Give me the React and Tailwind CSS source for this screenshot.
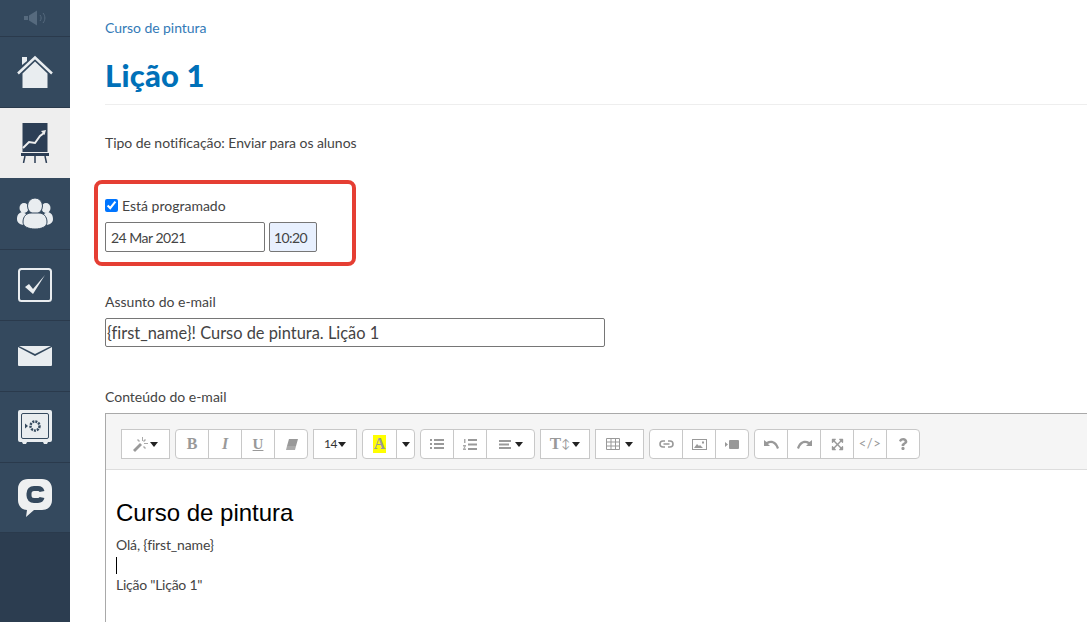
import React from 'react';
import { FaExpandArrowsAlt, FaQuestion } from 'react-icons/fa';

const Caret = () => (
    <svg width="8" height="5" viewBox="0 0 8 5" className="shrink-0"><path d="M0 0h8L4 5z" fill="#222" /></svg>
);

function Megaphone() {
    return (
        <svg width="24" height="16" viewBox="0 0 24 16" fill="#566a7e">
            <path d="M1 6h4v4H1zM6 5.500l8-5v15l-8-5z" />
            <path d="M17 5c1.500 1.800 1.500 4.200 0 6M20 3c2.500 3 2.500 7 0 10" fill="none" stroke="#566a7e" />
        </svg>
    );
}

function HomeIcon() {
    return (
        <svg width="36" height="34" viewBox="0 0 36 34">
            <path d="M5 2h5v4L5 10z" fill="#e9edf0" />
            <path d="M1 18.500L18 2.500l17 16" fill="none" stroke="#e9edf0" strokeWidth="2.500" />
            <path d="M5.500 18.500L18 6.500l12.500 12V33h-25z" fill="#e9edf0" />
        </svg>
    );
}

function ChartIcon() {
    return (
        <svg width="28" height="40" viewBox="0 0 28 40">
            <rect x="1.500" y="0" width="25" height="29" fill="#2c3e55" />
            <path d="M2 25l6-6 6 1 5-7 4-3" fill="none" stroke="#eee" strokeWidth="2" />
            <path d="M25 7l-5 1 3.500 4z" fill="#eee" />
            <rect x="0" y="30" width="28" height="3" fill="#2c3e55" />
            <path d="M4 33l-1.500 7M14 33v7M24 33l1.500 7" stroke="#2c3e55" strokeWidth="1.500" />
        </svg>
    );
}

function TeamIcon() {
    return (
        <svg width="36" height="31" viewBox="0 0 36 31" fill="#e9edf0">
            <ellipse cx="7" cy="10" rx="4.500" ry="5" />
            <ellipse cx="29" cy="10" rx="4.500" ry="5" />
            <path d="M0 21c0-5 3-7 6-7l3 2-2 11c-4-.500-7-2-7-6zM36 21c0-5-3-7-6-7l-3 2 2 11c4-.500 7-2 7-6z" />
            <ellipse cx="18" cy="8" rx="7.500" ry="8" stroke="#34495e" strokeWidth="1" />
            <path d="M6 24c0-6 4-9 8-9h8c4 0 8 3 8 9 0 5-6 7-12 7S6 29 6 24z" stroke="#34495e" strokeWidth="1" />
        </svg>
    );
}

function CheckIcon() {
    return (
        <svg width="34" height="34" viewBox="0 0 34 34">
            <rect x="1" y="1" width="32" height="32" rx="2.500" fill="none" stroke="#e9edf0" strokeWidth="2" />
            <path d="M7 19l4-3 4 5L27 7 15 26z" fill="#e9edf0" />
        </svg>
    );
}

function MailIcon() {
    return (
        <svg width="34" height="20" viewBox="0 0 34 20" fill="#e9edf0">
            <path d="M0 1l17 9 17-9v18a1 1 0 0 1-1 1H1a1 1 0 0 1-1-1z" />
            <path d="M1 0h32L17 8z" />
        </svg>
    );
}

function SafeIcon() {
    return (
        <svg width="34" height="34" viewBox="0 0 34 34">
            <path d="M2 0h30a2 2 0 0 1 2 2v28a2 2 0 0 1-2 2h-2l-1 2h-3l-1-2H9l-1 2H5l-1-2H2a2 2 0 0 1-2-2V2a2 2 0 0 1 2-2z" fill="#e9edf0" />
            <rect x="3.500" y="3.500" width="27" height="25" rx="1.500" fill="none" stroke="#34495e" />
            <circle cx="17" cy="16" r="4.500" fill="none" stroke="#34495e" strokeWidth="2.500" strokeDasharray="2 1" />
            <path d="M7 13.500l3 2.500-3 2.500z" fill="#34495e" />
        </svg>
    );
}

function ChatIcon() {
    return (
        <svg width="34" height="38" viewBox="0 0 34 38">
            <path d="M10 0h14c6 0 10 4 10 10v11c0 6-4 10-10 10H16l-8 7 1-7C4 31 0 27 0 21V10C0 4 4 0 10 0z" fill="#eef0f1" />
            <path d="M24 12.500c-.500-2-2-3-4-3h-4c-3 0-5 2-5 5v2c0 3 2 5 5 5h4c2 0 3.500-1 4-3" fill="none" stroke="#34495e" strokeWidth="5" />
        </svg>
    );
}

function Sidebar() {
    const items = [
        [HomeIcon, 'h-[71px]', false],
        [ChartIcon, 'h-[70px]', true],
        [TeamIcon, 'h-[72px]', false],
        [CheckIcon, 'h-[71px]', false],
        [MailIcon, 'h-[71px]', false],
        [SafeIcon, 'h-[71px]', false],
        [ChatIcon, 'h-[70px]', false],
    ];
    return (
        <aside className="w-[70px] shrink-0 h-full bg-[#2c3d50] flex flex-col">
            <div className="h-[37px] bg-[#34495e] border-b border-[#2a3a4c] flex items-center justify-center">
                <Megaphone />
            </div>
            {items.map(([Icon, height, active], i) => (
                <div
                    key={i}
                    className={`${height} flex items-center justify-center border-b ${active ? 'bg-[#eeeeee] border-[#eeeeee]' : 'bg-[#34495e] border-[#2a3a4c]'}`}
                >
                    <Icon />
                </div>
            ))}
        </aside>
    );
}

// toolbar glyphs, same grey as the editor's icon font
const WandIcon = () => (
    <svg width="15" height="15" viewBox="0 0 15 15" fill="#999">
        <path d="M0 13l7-7 2 2-7 7z" />
        <path d="M9 0h1v4H9zM11 6h4v1h-4zM12 2l1 1-2 2-1-1zM5 2l2 2-1 1-2-2zM11 9l2 2-1 1-2-2z" fill="#aaa" />
    </svg>
);
const EraserIcon = () => (
    <svg width="13" height="11" viewBox="0 0 13 11" fill="#999">
        <path d="M4 0h9l-2 7H2z" />
        <path d="M2 7h9l-1 4H1z" fill="#aaa" />
    </svg>
);
const ListIcon = () => (
    <svg width="14" height="10" viewBox="0 0 14 10" fill="#999">
        <path d="M0 0h2v2H0zM4 0h10v2H4zM0 4h2v2H0zM4 4h10v2H4zM0 8h2v2H0zM4 8h10v2H4z" />
    </svg>
);
const OrderedIcon = () => (
    <svg width="14" height="11" viewBox="0 0 14 11" fill="#999">
        <path d="M5 0h9v2H5zM5 4.500h9v2H5zM5 9h9v2H5z" />
        <path d="M1 0h1.500v4H1zM0 6h3v1L1.500 9.500H3V11H0v-1l1.500-2.500H0z" fill="#aaa" />
    </svg>
);
const AlignIcon = () => (
    <svg width="12" height="9" viewBox="0 0 12 9" fill="#999">
        <path d="M0 0h12v2H0zM0 3.500h10v2H0zM0 7h12v2H0z" />
    </svg>
);
const TableIcon = () => (
    <svg width="14" height="12" viewBox="0 0 14 12" fill="none" stroke="#999">
        <path d="M.5.500h13v11H.5zM.5 4h13M.5 8h13M5 .5v11M9.500.5v11" />
    </svg>
);
const LinkIcon = () => (
    <svg width="15" height="8" viewBox="0 0 15 8" fill="none" stroke="#999" strokeWidth="1.600">
        <path d="M6 1H4a3 3 0 0 0 0 6h2M9 1h2a3 3 0 0 1 0 6H9M4.500 4h6" />
    </svg>
);
const ImageIcon = () => (
    <svg width="15" height="11" viewBox="0 0 15 11">
        <rect x=".5" y=".5" width="14" height="10" fill="none" stroke="#999" />
        <path d="M2 9l3-4 2 2 1-1 3 3z" fill="#999" />
        <rect x="10" y="2.500" width="2" height="2" fill="#999" />
    </svg>
);
const VideoIcon = () => (
    <svg width="14" height="9" viewBox="0 0 14 9" fill="#999">
        <path d="M0 2l3 2.500L0 7z" />
        <rect x="4" y="0" width="10" height="9" rx="1" />
    </svg>
);
const UndoIcon = ({ flip }) => (
    <svg width="15" height="9" viewBox="0 0 15 9" fill="#999" className={flip ? '-scale-x-100' : ''}>
        <path d="M0 0v6h6L4 4c3-2 7-1 9 5l2-1C13 1 7-1 2.500 2z" />
    </svg>
);

const btn = 'h-[30px] flex items-center justify-center bg-white border border-[#c8c8c8] text-[#999] text-[14px]';

function Group({ width, children }) {
    return (
        <div className={`${width} flex rounded-[4px] overflow-hidden border border-[#c8c8c8] h-[30px] bg-white [&>*]:border-r [&>*]:border-[#c8c8c8] [&>*:last-child]:border-r-0 [&>*:last-child]:w-auto [&>*:last-child]:flex-1`}>
            {children}
        </div>
    );
}

const Cell = ({ w = 'w-[33px]', children }) => (
    <div className={`${w} h-full flex items-center justify-center gap-[4px] text-[#999] text-[14px]`}>{children}</div>
);

function Toolbar() {
    return (
        <div className="h-[56px] bg-[#f5f5f5] border-b border-[#dddddd] pl-[15px] pt-[15px] flex gap-[5px]">
            <div className={`${btn} w-[49px] gap-[2px]`}><WandIcon /><Caret /></div>
            <Group width="w-[133px]">
                <Cell><span className="font-['Liberation_Serif',serif] font-bold text-[16px]">B</span></Cell>
                <Cell><span className="font-['Liberation_Serif',serif] italic font-bold text-[16px]">I</span></Cell>
                <Cell><span className="font-['Liberation_Serif',serif] font-bold text-[15px] underline">U</span></Cell>
                <Cell><EraserIcon /></Cell>
            </Group>
            <div className={`${btn} w-[44px] !text-[#333] !text-[12px] gap-[1px] tracking-[-0.5px]`}>14<Caret /></div>
            <Group width="w-[53px]">
                <Cell w="w-[34px]"><span className="bg-[#ffff00] font-['Liberation_Serif',serif] font-bold text-[16px] leading-[18px] px-[1px]">A</span></Cell>
                <Cell><Caret /></Cell>
            </Group>
            <Group width="w-[115px]">
                <Cell><ListIcon /></Cell>
                <Cell><OrderedIcon /></Cell>
                <Cell><AlignIcon /><Caret /></Cell>
            </Group>
            <div className={`${btn} w-[50px] gap-[2px]`}>
                <span className="font-['Liberation_Serif',serif] font-bold text-[17px]">T</span>
                <span className="text-[12px] -ml-[2px]">↕</span>
                <Caret />
            </div>
            <div className={`${btn} w-[49px] gap-[5px]`}>
                <TableIcon />
                <Caret />
            </div>
            <Group width="w-[100px]">
                <Cell><LinkIcon /></Cell>
                <Cell><ImageIcon /></Cell>
                <Cell><VideoIcon /></Cell>
            </Group>
            <Group width="w-[166px]">
                <Cell><UndoIcon /></Cell>
                <Cell><UndoIcon flip /></Cell>
                <Cell><FaExpandArrowsAlt size={13} /></Cell>
                <Cell><span className="text-[13px] tracking-[0.5px]">{'</>'}</span></Cell>
                <Cell><FaQuestion size={12} /></Cell>
            </Group>
        </div>
    );
}

export default function App() {
    return (
        <div className="h-[622px] w-full flex overflow-hidden bg-white font-['Lato','Open_Sans',sans-serif] text-[14px] text-[#444] [font-variant-ligatures:none]">
            <Sidebar />
            <main className="flex-1 min-w-0 pl-[35px]">
                <div className="pt-[19px] leading-[18px] text-[#337ab7] tracking-[-0.05px]">Curso de pintura</div>
                <h1 className="mt-[18px] text-[31px] leading-[40px] font-black text-[#0070b8] tracking-[0.2px]">Lição 1</h1>
                <div className="mt-[9px] border-t border-[#eeeeee]" />
                <p className="mt-[29px] leading-[18px] tracking-[-0.05px]">Tipo de notificação: Enviar para os alunos</p>

                <div className="mt-[28px] -ml-[11px] w-[262px] h-[86px] border-4 border-[#e53e33] rounded-[8px] pl-[7px] pt-[12px]">
                    <label className="flex items-center h-[18px] gap-[4px]">
                        <input type="checkbox" defaultChecked className="w-[13px] h-[13px] accent-[#0075ff]" />
                        Está programado
                    </label>
                    <div className="mt-[8px] flex gap-[4px]">
                        <input readOnly value="24 Mar 2021" className="w-[160px] h-[30px] border border-[#767676] rounded-[2px] px-[5px] outline-none tracking-[-0.5px]" />
                        <input readOnly value="10:20" className="w-[48px] h-[30px] border border-[#767676] rounded-[2px] bg-[#e8f0fe] px-[4px] outline-none tracking-[-0.6px]" />
                    </div>
                </div>

                <div className="mt-[27px] leading-[18px]">Assunto do e-mail</div>
                <input readOnly value="{first_name}! Curso de pintura. Lição 1" className="mt-[7px] block w-[500px] h-[29px] border border-[#767676] rounded-[2px] px-[1px] text-[16.4px] outline-none" />

                <div className="mt-[41px] leading-[18px]">Conteúdo do e-mail</div>
                <div className="mt-[7px] border-t border-l border-[#a9a9a9] h-[300px]">
                    <Toolbar />
                    <div className="pl-[10px] pt-[29px] text-[14px] text-[#444]">
                        <div className="font-['Liberation_Sans',Arial,sans-serif] text-[24px] leading-[28px] text-black">Curso de pintura</div>
                        <div className="mt-[8px] leading-[20px] tracking-[-0.15px]">Olá, {'{first_name}'}</div>
                        <div className="h-[20px] flex items-center"><div className="w-[1px] h-[17px] bg-black" /></div>
                        <div className="leading-[20px] tracking-[-0.25px]">Lição "Lição 1"</div>
                    </div>
                </div>
            </main>
        </div>
    );
}
